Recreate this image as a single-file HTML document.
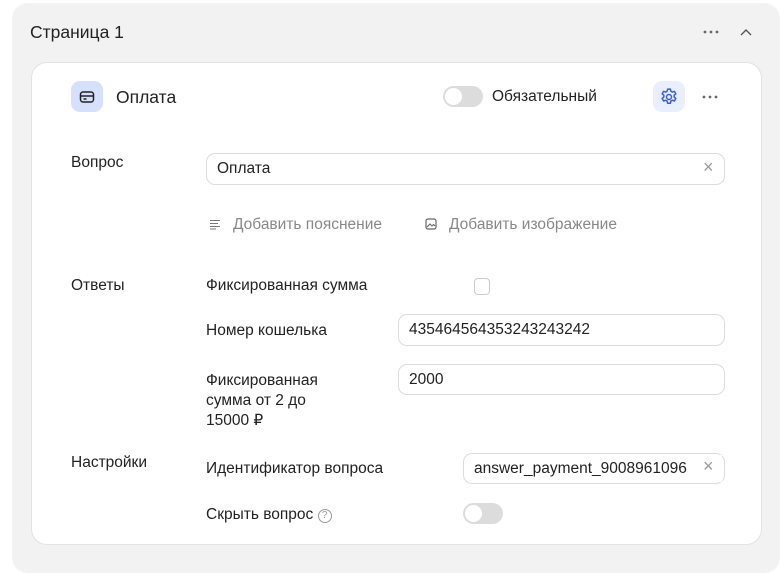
<!DOCTYPE html>
<html><head><meta charset="utf-8"><style>
*{box-sizing:border-box;margin:0;padding:0}
body{width:784px;height:560px;background:#fff;font-family:"Liberation Sans",sans-serif;color:#222;position:relative;overflow:hidden}
.a{position:absolute}
.outer{left:12px;top:3px;width:768px;height:570px;background:#f2f2f2;border-radius:16px}
.card{left:31px;top:62px;width:731px;height:483px;background:#fff;border:1px solid #e3e3e3;border-radius:16px}
.t{font-size:15.5px;line-height:18px;white-space:nowrap}
.inp{border:1px solid #dcdcdc;border-radius:9px;background:#fff;height:32px;font-size:15.5px;line-height:30px;padding-left:10px;white-space:nowrap;overflow:hidden}
.x{font-size:18px;color:#999}
.tog{width:40px;height:21px;border-radius:11px;background:#dcdcdc}
.tog::after{content:"";position:absolute;left:2px;top:2px;width:17px;height:17px;border-radius:50%;background:#fff}
.g{color:#888}
</style></head><body>
<div class="a outer"></div>
<div class="a t" style="left:30px;top:22px;font-size:17.5px;line-height:20px">Страница 1</div>
<svg class="a" style="left:703px;top:30px" width="16" height="4"><circle cx="2" cy="2" r="1.4" fill="#666"/><circle cx="8" cy="2" r="1.4" fill="#666"/><circle cx="14" cy="2" r="1.4" fill="#666"/></svg>
<svg class="a" style="left:740px;top:28px" width="12" height="8" viewBox="0 0 12 8"><path d="M1 7L6 2L11 7" fill="none" stroke="#555" stroke-width="1.4"/></svg>
<div class="a card"></div>
<div class="a" style="left:71px;top:81px;width:32px;height:31px;border-radius:9px;background:#d5e0fd"></div>
<svg class="a" style="left:79px;top:89px" width="16" height="16" viewBox="0 0 16 16"><rect x="1.5" y="3" width="13" height="10" rx="2.5" fill="none" stroke="#222" stroke-width="1.5"/><path d="M1.5 7h13" stroke="#222" stroke-width="1.5"/><path d="M4.5 10h3" stroke="#222" stroke-width="1.5"/></svg>
<div class="a t" style="left:116px;top:87px;font-size:17.5px;line-height:20px">Оплата</div>
<div class="a tog" style="left:443px;top:86px"></div>
<div class="a t" style="left:492px;top:88px">Обязательный</div>
<div class="a" style="left:653px;top:81px;width:32px;height:31px;border-radius:9px;background:#e9efff"></div>
<svg class="a" style="left:659px;top:87px" width="20" height="20" viewBox="0 0 24 24"><path d="M10.3 2.5h3.4l.5 2.6 1.8 1 2.5-.9 1.7 3-2 1.7v2.2l2 1.7-1.7 3-2.5-.9-1.8 1-.5 2.6h-3.4l-.5-2.6-1.8-1-2.5.9-1.7-3 2-1.7v-2.2l-2-1.7 1.7-3 2.5.9 1.8-1z" fill="none" stroke="#3c5fd0" stroke-width="1.8" stroke-linejoin="round"/><circle cx="12" cy="12" r="3" fill="none" stroke="#3c5fd0" stroke-width="1.8"/></svg>
<svg class="a" style="left:702px;top:95px" width="16" height="4"><circle cx="2" cy="2" r="1.4" fill="#666"/><circle cx="8" cy="2" r="1.4" fill="#666"/><circle cx="14" cy="2" r="1.4" fill="#666"/></svg>

<div class="a t" style="left:71px;top:154px">Вопрос</div>
<div class="a inp" style="left:206px;top:153px;width:519px">Оплата</div>
<div class="a x" style="left:703px;top:157px">×</div>
<svg class="a" style="left:209px;top:219px" width="12" height="11"><path d="M1 1.5h10M1 4.5h8M1 7.5h10M1 10h6" stroke="#777" stroke-width="1.1"/></svg>
<div class="a t g" style="left:233px;top:216px">Добавить пояснение</div>
<svg class="a" style="left:425px;top:218px" width="12" height="12" viewBox="0 0 12 12"><rect x="1" y="1" width="10" height="10" rx="2" fill="none" stroke="#666" stroke-width="1.2"/><path d="M2 9l3-3 2 2 1.5-1.5L10 8" fill="none" stroke="#666" stroke-width="1.1"/></svg>
<div class="a t g" style="left:449px;top:216px">Добавить изображение</div>

<div class="a t" style="left:71px;top:277px">Ответы</div>
<div class="a t" style="left:206px;top:277px">Фиксированная сумма</div>
<div class="a" style="left:474px;top:278px;width:16px;height:17px;border:1px solid #ccc;border-radius:4px"></div>
<div class="a t" style="left:206px;top:322px">Номер кошелька</div>
<div class="a inp" style="left:398px;top:314px;width:327px">435464564353243243242</div>
<div class="a t" style="left:206px;top:371px;line-height:20px;white-space:normal">Фиксированная<br>сумма от 2 до<br>15000 ₽</div>
<div class="a inp" style="left:398px;top:364px;width:327px;height:31px">2000</div>

<div class="a t" style="left:71px;top:454px">Настройки</div>
<div class="a t" style="left:206px;top:460px">Идентификатор вопроса</div>
<div class="a inp" style="left:463px;top:453px;width:262px;height:31px;padding-right:30px">answer_payment_9008961096</div>
<div class="a" style="left:688px;top:455px;width:34px;height:27px;background:#fff"></div>
<div class="a x" style="left:703px;top:456px">×</div>
<div class="a t" style="left:206px;top:506px">Скрыть вопрос <span style="display:inline-block;width:14px;height:14px;border:1px solid #999;border-radius:50%;font-size:10px;line-height:12px;text-align:center;color:#999;vertical-align:1px">?</span></div>
<div class="a tog" style="left:463px;top:503px"></div>
</body></html>
